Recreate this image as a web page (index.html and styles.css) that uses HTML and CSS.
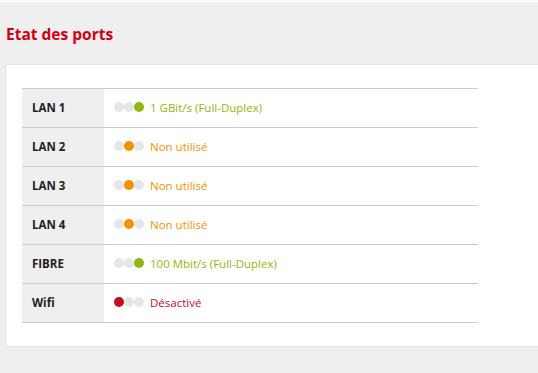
FILE: index.html
```html
<!DOCTYPE html>
<html lang="fr">
<head>
<meta charset="utf-8">
<link rel="stylesheet" href="styles.css">
</head>
<body>
<div class="topline"></div>
<h1 class="title">Etat des ports</h1>
<div class="card">
  <table class="ports">
    <tr><th>LAN 1</th><td><span class="dots"><i></i><i></i><i class="on green"></i></span><span class="green-t">1 GBit/s (Full-Duplex)</span></td></tr>
    <tr><th>LAN 2</th><td><span class="dots"><i></i><i class="on orange"></i><i></i></span><span class="orange-t">Non utilisé</span></td></tr>
    <tr><th>LAN 3</th><td><span class="dots"><i></i><i class="on orange"></i><i></i></span><span class="orange-t">Non utilisé</span></td></tr>
    <tr><th>LAN 4</th><td><span class="dots"><i></i><i class="on orange"></i><i></i></span><span class="orange-t">Non utilisé</span></td></tr>
    <tr><th>FIBRE</th><td><span class="dots"><i></i><i></i><i class="on green"></i></span><span class="green-t">100 Mbit/s (Full-Duplex)</span></td></tr>
    <tr><th>Wifi</th><td><span class="dots"><i class="on red"></i><i></i><i></i></span><span class="red-t">Désactivé</span></td></tr>
  </table>
</div>
</body>
</html>
```
FILE: styles.css
```css
html, body {
  margin: 0;
  padding: 0;
}
body {
  background: #efefef;
  font-family: "Open Sans", "Liberation Sans", sans-serif;
  height: 373px;
  overflow: hidden;
}
.topline {
  height: 2px;
  background: #fafafa;
}
.title {
  margin: 0;
  padding: 22px 0 0 6px;
  height: 40px;
  box-sizing: border-box;
  font-size: 15.5px;
  font-weight: 700;
  color: #d4000f;
  line-height: 20px;
}
.card {
  margin: 22px 0 0 5px;
  background: #fff;
  border: 1px solid #e2e2e2;
  border-right: none;
  padding: 23px 0 23px 16px;
}
.ports {
  width: 456px;
  border-collapse: collapse;
}
.ports tr {
  height: 39px;
  border-top: 1px solid #cccccc;
  border-bottom: 1px solid #cccccc;
}
.ports th {
  width: 82px;
  box-sizing: border-box;
  background: #efefef;
  text-align: left;
  padding: 0 0 2px 10px;
  font-size: 11.5px;
  font-weight: 700;
  color: #222;
}
.ports td {
  padding: 0 0 2px 10px;
  font-size: 11.5px;
}
.dots {
  display: inline-flex;
  vertical-align: middle;
  margin-right: 6px;
  position: relative;
  top: -1px;
}
.dots i {
  display: block;
  width: 10px;
  height: 10px;
  border-radius: 50%;
  background: #e6e6e6;
}
.dots i.green { background: #8dba0a; }
.dots i.orange { background: #f39200; }
.dots i.red { background: #c40d20; }
.green-t { color: #8dba0a; }
.orange-t { color: #f39200; }
.red-t { color: #c40d20; }
```
